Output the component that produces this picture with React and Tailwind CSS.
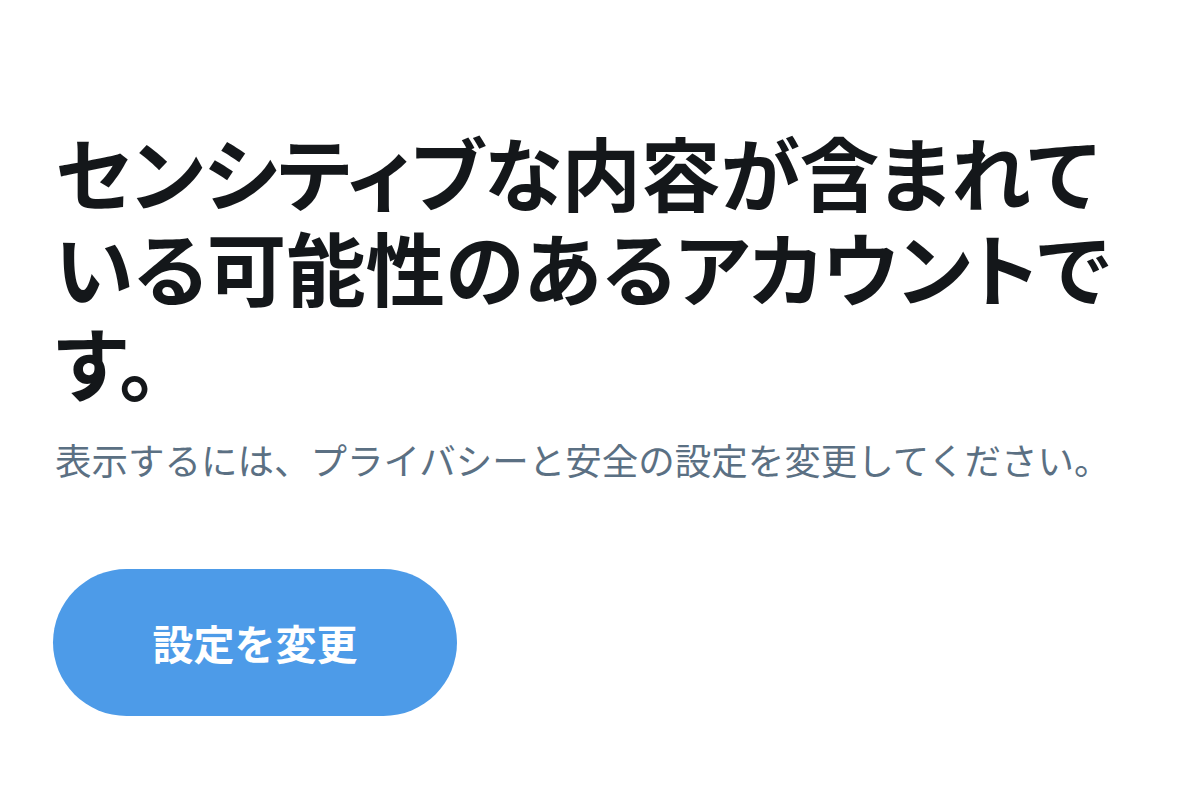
export default function App() {
  return (
    <div
      className="min-h-[808px] w-[1200px] bg-white pl-[55px] pt-[123px]"
      style={{ fontFamily: '"Noto Sans CJK JP", "Noto Sans", sans-serif' }}
    >
      <h1 className="w-[1090px] text-[79.5px] font-bold leading-[95px] text-[#14171a] [font-feature-settings:'palt']">
        センシティブな内容が含まれている可能性のあるアカウントです。
      </h1>
      <p className="mt-[27px] text-[36.5px] leading-[50px] text-[#5b7083]">
        表示するには、プライバシーと安全の設定を変更してください。
      </p>
      <button className="-ml-[2px] mt-[84px] flex h-[147px] w-[404px] items-center justify-center rounded-full bg-[#4d9be8] text-[41px] font-bold text-white">
        設定を変更
      </button>
    </div>
  );
}
